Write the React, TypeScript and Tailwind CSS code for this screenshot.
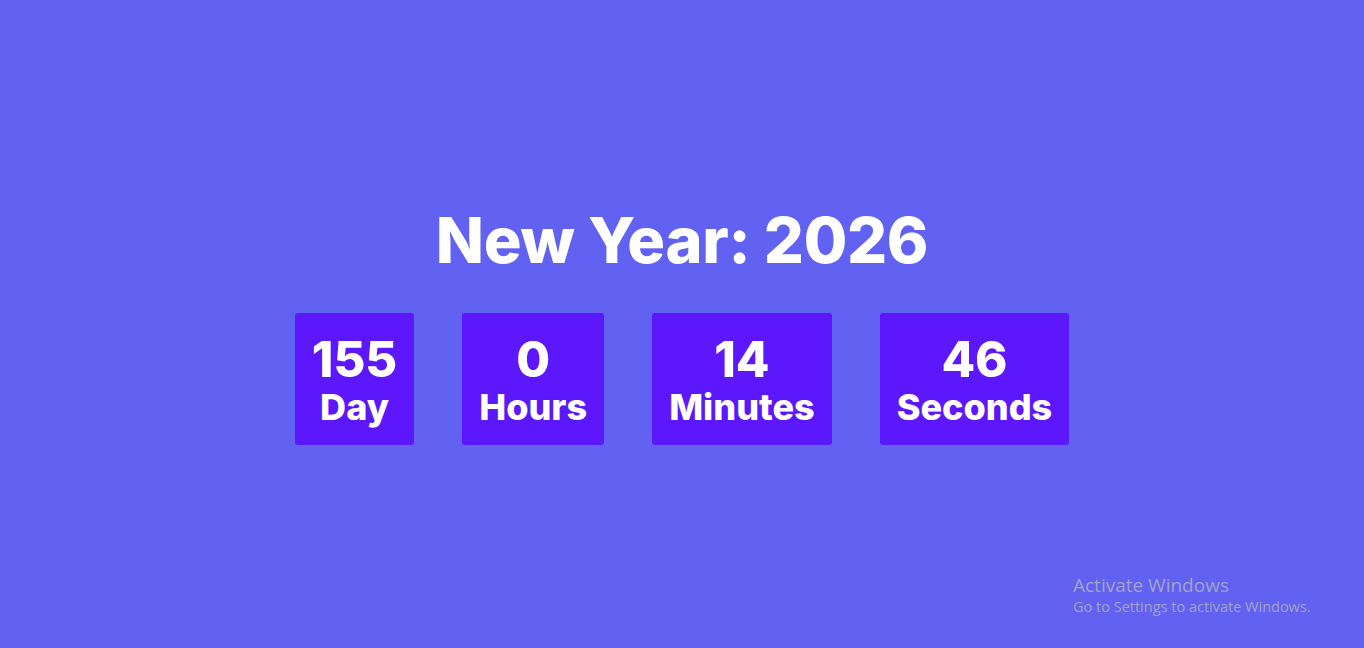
import React from 'react';

const units = [
  { value: 155, label: 'Day' },
  { value: 0, label: 'Hours' },
  { value: 14, label: 'Minutes' },
  { value: 46, label: 'Seconds' },
];

export default function App() {
  return (
    <div
      className="relative h-screen w-full bg-[#6161f2] flex flex-col items-center justify-center text-white"
      style={{ fontFamily: 'Inter, "Noto Sans", sans-serif' }}
    >
      <h1 className="mt-[6px] text-[63px] font-extrabold leading-none tracking-[-0.3px]">New Year: 2026</h1>

      <div className="mt-[41px] flex gap-12">
        {units.map((u) => (
          <div
            key={u.label}
            className="flex flex-col items-center rounded-[3px] bg-[#5c17fc] px-[17px] pt-[22px] pb-[16px]"
          >
            <span className="text-[49px] font-extrabold leading-[50px]">{u.value}</span>
            <span className="text-[36px] font-extrabold leading-[44px]">{u.label}</span>
          </div>
        ))}
      </div>

      {/* windows watermark */}
      <div
        className="absolute left-[1073px] top-[573px] text-[#a3a3c8]"
        style={{ fontFamily: '"Segoe UI", "Open Sans", sans-serif' }}
      >
        <div className="text-[19px] leading-[24px]">Activate Windows</div>
        <div className="text-[14.5px] leading-[20px]">Go to Settings to activate Windows.</div>
      </div>
    </div>
  );
}
